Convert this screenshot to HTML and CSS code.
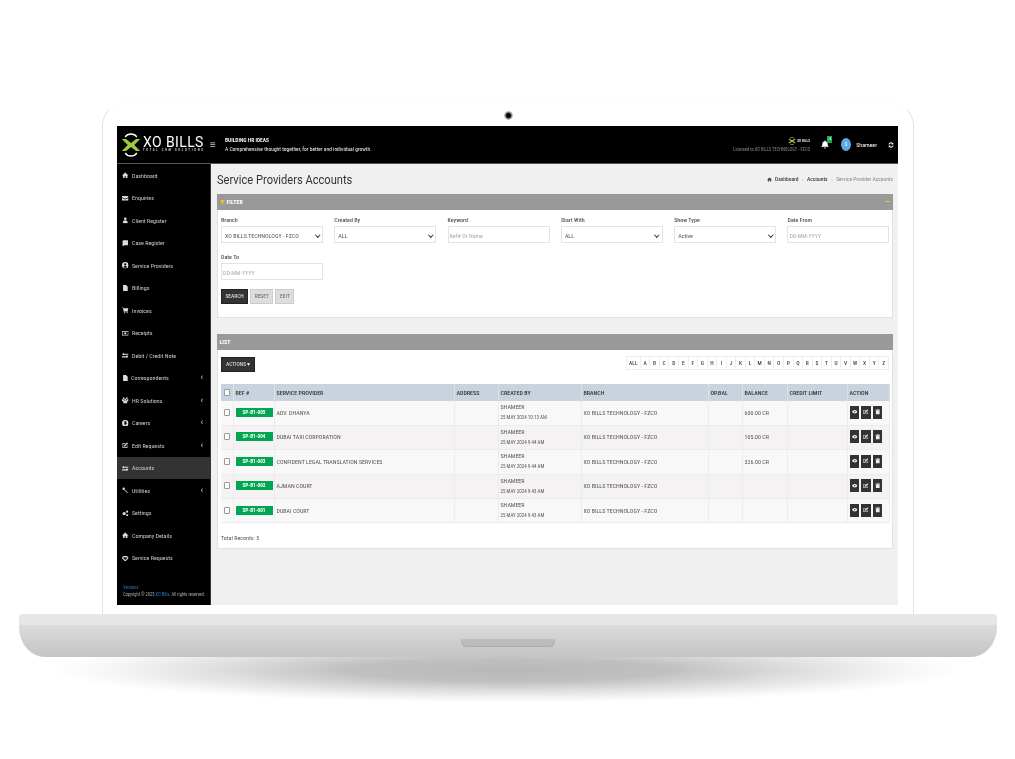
FILE: index.html
```html
<!DOCTYPE html>
<html lang="en">
<head>
<meta charset="utf-8">
<title>Service Providers Accounts</title>
<link rel="stylesheet" href="styles.css">
</head>
<body>
<svg class="defs" width="0" height="0" aria-hidden="true">
  <symbol id="i-home" viewBox="0 0 12 12"><path d="M6 1 0 6.5h2V11h3V8h2v3h3V6.5h2z"/></symbol>
  <symbol id="i-mail" viewBox="0 0 12 12"><path d="M0 2h12v2L6 7 0 4zM0 5.5 6 8.500l6-3V10H0z"/></symbol>
  <symbol id="i-user" viewBox="0 0 12 12"><circle cx="6" cy="3.200" r="2.500"/><path d="M1.500 11.500c0-4 1.500-5.500 4.500-5.500s4.500 1.500 4.500 5.500z"/></symbol>
  <symbol id="i-book" viewBox="0 0 12 12"><path d="M3 .5h8v9H3.500a1 1 0 0 0 0 1.500H11v1H3a2 2 0 0 1-2-2V2.500a2 2 0 0 1 2-2z"/></symbol>
  <symbol id="i-circle-user" viewBox="0 0 12 12"><path fill-rule="evenodd" d="M6 0a6 6 0 1 1 0 12A6 6 0 0 1 6 0zm0 2.500a2 2 0 1 0 0 4 2 2 0 0 0 0-4zM2.800 9.500c1.800 1.500 4.600 1.500 6.400 0C8.800 8 7.500 7.300 6 7.300S3.200 8 2.800 9.500z"/></symbol>
  <symbol id="i-file" viewBox="0 0 12 12"><path d="M2 0h5.500L10.500 3v9H2z"/></symbol>
  <symbol id="i-cart" viewBox="0 0 12 12"><path d="M0 1h2.500l.4 1.500H12l-1.300 5H4.200l.3 1H11v1H3.500L1.800 2H0z"/><circle cx="4.500" cy="10.800" r="1.100"/><circle cx="9.500" cy="10.800" r="1.100"/></symbol>
  <symbol id="i-money" viewBox="0 0 12 12"><path fill-rule="evenodd" d="M0 2h12v8H0zM1.200 3.200v5.600h9.600V3.200zM6 4a2 2 0 1 1 0 4 2 2 0 0 1 0-4z"/></symbol>
  <symbol id="i-swap" viewBox="0 0 12 12"><path d="M3.500 1.500v1.500H12v2H3.500v1.500L0 4zM8.500 5.500 12 8.500l-3.500 3V10H0V8h8.500z"/></symbol>
  <symbol id="i-team" viewBox="0 0 12 12"><circle cx="3" cy="2" r="1.600"/><circle cx="9" cy="2" r="1.600"/><circle cx="6" cy="4.500" r="1.800"/><path d="M0 4h3l.7 2.500h4.600L9 4h3v4H9.500v4h-7V8H0z"/></symbol>
  <symbol id="i-globe" viewBox="0 0 12 12"><path fill-rule="evenodd" d="M6 0a6 6 0 1 1 0 12A6 6 0 0 1 6 0zM3.500 3 5 5l-1 2 2 3 1-2 2-1-1.500-3 .5-2z"/></symbol>
  <symbol id="i-edit" viewBox="0 0 12 12"><path d="M1 2h6L5.800 3.200H2.200v6.600h6.600V6.800L10 5.600V11H1z"/><path d="M9.500.8l1.700 1.700L5.500 8.200l-2 .4.300-2.100z"/></symbol>
  <symbol id="i-tools" viewBox="0 0 12 12"><path d="M1 3.500 3.500 1 5 2.500 4 3.500 11 10.500 10 11.500 3 4.500 2.500 5z"/><circle cx="3" cy="3" r="2"/></symbol>
  <symbol id="i-cogs" viewBox="0 0 12 12"><circle cx="4" cy="6.500" r="3"/><circle cx="9.500" cy="3" r="2"/><circle cx="9.500" cy="10" r="2"/></symbol>
  <symbol id="i-shake" viewBox="0 0 12 12"><path fill-rule="evenodd" d="M0 4 3 2h6l3 2v2l-5 5-2 0-5-5zM3 4 2 5l4 4 4-4-1-1-2 1-1.500-1z"/></symbol>
  <symbol id="i-eye" viewBox="0 0 12 12"><path fill-rule="evenodd" d="M0 6c3-5 9-5 12 0-3 5-9 5-12 0zm6-1.500a1.500 1.500 0 1 0 0 3 1.500 1.500 0 0 0 0-3z"/></symbol>
  <symbol id="i-trash" viewBox="0 0 12 12"><path d="M4.500.5h3L8 1.500h3V3H1V1.500h3zM2 4h8v8H2z"/></symbol>
  <symbol id="i-filter" viewBox="0 0 12 12"><path d="M0 1h12L7.500 6.500V12l-3-2V6.500z"/></symbol>
  <symbol id="i-bell" viewBox="0 0 12 12"><path d="M6 0a1 1 0 0 1 1 1c2.200.5 3 2.200 3 4 0 2.500.7 3.500 2 4.500H0c1.300-1 2-2 2-4.500 0-1.800.8-3.500 3-4A1 1 0 0 1 6 0zM4.500 10.500h3a1.500 1.500 0 0 1-3 0z"/></symbol>
  <symbol id="i-sync" viewBox="0 0 12 12"><path d="M10.500 1v3.800H6.700l1.400-1.400A3.400 3.400 0 0 0 2.700 5H1a5 5 0 0 1 8.300-3.200zM1.500 11V7.200h3.800L3.900 8.600A3.400 3.400 0 0 0 9.300 7H11a5 5 0 0 1-8.300 3.200z"/></symbol>
  <symbol id="i-mark" viewBox="0 0 24 24" preserveAspectRatio="none"><path class="mark-ring" d="M5 4C8 0 16 0 19 4M5 20c3 4 11 4 14 0"/><path class="mark-x" d="M1 6h5l6 4 6-4h5l-7 6 7 6h-5l-6-4-6 4H1l7-6z"/></symbol>
</svg>

<main class="stage">
  <section class="lid">
    <span class="camera"></span>
    <div class="screen">
      <header class="topbar">
        <div class="brand">
          <svg class="brand-mark"><use href="#i-mark"/></svg>
          <div class="brand-text">
            <span class="brand-name">XO BILLS</span>
            <span class="brand-tag">TOTAL CRM SOLUTIONS</span>
          </div>
        </div>
        <span class="burger">≡</span>
        <div class="slogan">
          <strong>BUILDING HR IDEAS</strong>
          <span>A Comprehensive thought together, for better and individual growth.</span>
        </div>
        <div class="license">
          <span class="license-logo"><svg class="license-mark"><use href="#i-mark"/></svg>XO BILLS</span>
          <span class="license-text">Licensed to XO BILLS TECHNOLOGY - FZCO</span>
        </div>
        <div class="bell"><svg class="bell-icon"><use href="#i-bell"/></svg><span class="bell-badge">24</span></div>
        <span class="avatar">S</span>
        <span class="user-name">Shameer</span>
        <svg class="sync-icon"><use href="#i-sync"/></svg>
      </header>
      <div class="body">
        <aside class="sidebar">
          <nav class="nav">
            <a class="nav-item"><svg class="nav-icon"><use href="#i-home"/></svg><span>Dashboard</span></a>
            <a class="nav-item"><svg class="nav-icon"><use href="#i-mail"/></svg><span>Enquiries</span></a>
            <a class="nav-item"><svg class="nav-icon"><use href="#i-user"/></svg><span>Client Register</span></a>
            <a class="nav-item"><svg class="nav-icon"><use href="#i-book"/></svg><span>Case Register</span></a>
            <a class="nav-item"><svg class="nav-icon"><use href="#i-circle-user"/></svg><span>Service Providers</span></a>
            <a class="nav-item"><svg class="nav-icon"><use href="#i-file"/></svg><span>Billings</span></a>
            <a class="nav-item"><svg class="nav-icon"><use href="#i-cart"/></svg><span>Invoices</span></a>
            <a class="nav-item"><svg class="nav-icon"><use href="#i-money"/></svg><span>Receipts</span></a>
            <a class="nav-item"><svg class="nav-icon"><use href="#i-swap"/></svg><span>Debit / Credit Note</span></a>
            <a class="nav-item tight"><svg class="nav-icon"><use href="#i-file"/></svg><span>Correspondents</span><i class="caret">‹</i></a>
            <a class="nav-item"><svg class="nav-icon"><use href="#i-team"/></svg><span>HR Solutions</span><i class="caret">‹</i></a>
            <a class="nav-item"><svg class="nav-icon"><use href="#i-globe"/></svg><span>Careers</span><i class="caret">‹</i></a>
            <a class="nav-item"><svg class="nav-icon"><use href="#i-edit"/></svg><span>Edit Requests</span><i class="caret">‹</i></a>
            <a class="nav-item active"><svg class="nav-icon"><use href="#i-swap"/></svg><span>Accounts</span></a>
            <a class="nav-item"><svg class="nav-icon"><use href="#i-tools"/></svg><span>Utilities</span><i class="caret">‹</i></a>
            <a class="nav-item"><svg class="nav-icon"><use href="#i-cogs"/></svg><span>Settings</span></a>
            <a class="nav-item"><svg class="nav-icon"><use href="#i-home"/></svg><span>Company Details</span></a>
            <a class="nav-item"><svg class="nav-icon"><use href="#i-shake"/></svg><span>Service Requests</span></a>
          </nav>
          <footer class="side-foot">
            <span class="link">Versions</span>
            <span>Copyright © 2025 <b class="link">XO Bills</b>. All rights reserved.</span>
          </footer>
        </aside>
        <div class="content">
          <div class="page-head">
            <h1>Service Providers Accounts</h1>
            <div class="crumbs">
              <svg class="crumb-icon"><use href="#i-home"/></svg>
              <b>Dashboard</b><em>›</em><b>Accounts</b><em>›</em><span>Service Provider Accounts</span>
            </div>
          </div>

          <section class="panel filter">
            <div class="panel-head">
              <svg class="filter-icon"><use href="#i-filter"/></svg>
              <span>FILTER</span>
              <i class="collapse"></i>
            </div>
            <div class="filter-body">
              <div class="field-grid">
                <label class="field">Branch<div class="input select">XO BILLS TECHNOLOGY - FZCO</div></label>
                <label class="field">Created By<div class="input select">ALL</div></label>
                <label class="field">Keyword<div class="input hint">Ref# Or Name</div></label>
                <label class="field">Start With<div class="input select">ALL</div></label>
                <label class="field">Show Type<div class="input select">Active</div></label>
                <label class="field">Date From<div class="input hint">DD-MM-YYYY</div></label>
                <label class="field">Date To<div class="input hint">DD-MM-YYYY</div></label>
              </div>
              <div class="buttons">
                <span class="btn dark">SEARCH</span><span class="btn">RESET</span><span class="btn">EXIT</span>
              </div>
            </div>
          </section>

          <section class="panel list">
            <div class="panel-head"><span>LIST</span></div>
            <div class="list-body">
              <div class="toolbar">
                <span class="btn dark actions">ACTIONS ▾</span>
                <div class="alpha">
                  <span>ALL</span><span>A</span><span>B</span><span>C</span><span>D</span><span>E</span><span>F</span><span>G</span><span>H</span><span>I</span><span>J</span><span>K</span><span>L</span><span>M</span><span>N</span><span>O</span><span>P</span><span>Q</span><span>R</span><span>S</span><span>T</span><span>U</span><span>V</span><span>W</span><span>X</span><span>Y</span><span>Z</span>
                </div>
              </div>
              <table class="grid">
                <colgroup>
                  <col class="c-check"><col class="c-ref"><col class="c-sp"><col class="c-addr"><col class="c-by"><col class="c-branch"><col class="c-op"><col class="c-bal"><col class="c-limit"><col class="c-act">
                </colgroup>
                <thead>
                  <tr><th><i class="check"></i></th><th>REF #</th><th>SERVICE PROVIDER</th><th>ADDRESS</th><th>CREATED BY</th><th>BRANCH</th><th>OP.BAL</th><th>BALANCE</th><th>CREDIT LIMIT</th><th>ACTION</th></tr>
                </thead>
                <tbody>
                  <tr>
                    <td><i class="check"></i></td><td><span class="tag">SP-B1-005</span></td><td>ADV. DHANYA</td><td></td>
                    <td><span class="by">SHAMEER</span><small>25 MAY 2024 10:13 AM</small></td><td>XO BILLS TECHNOLOGY - FZCO</td><td></td><td>600.00 CR</td><td></td>
                    <td><div class="acts"><span class="act"><svg><use href="#i-eye"/></svg></span><span class="act"><svg><use href="#i-edit"/></svg></span><span class="act"><svg><use href="#i-trash"/></svg></span></div></td>
                  </tr>
                  <tr>
                    <td><i class="check"></i></td><td><span class="tag">SP-B1-004</span></td><td>DUBAI TAXI CORPORATION</td><td></td>
                    <td><span class="by">SHAMEER</span><small>25 MAY 2024 9:44 AM</small></td><td>XO BILLS TECHNOLOGY - FZCO</td><td></td><td>105.00 CR</td><td></td>
                    <td><div class="acts"><span class="act"><svg><use href="#i-eye"/></svg></span><span class="act"><svg><use href="#i-edit"/></svg></span><span class="act"><svg><use href="#i-trash"/></svg></span></div></td>
                  </tr>
                  <tr>
                    <td><i class="check"></i></td><td><span class="tag">SP-B1-003</span></td><td>CONFIDENT LEGAL TRANSLATION SERVICES</td><td></td>
                    <td><span class="by">SHAMEER</span><small>25 MAY 2024 9:44 AM</small></td><td>XO BILLS TECHNOLOGY - FZCO</td><td></td><td>326.00 CR</td><td></td>
                    <td><div class="acts"><span class="act"><svg><use href="#i-eye"/></svg></span><span class="act"><svg><use href="#i-edit"/></svg></span><span class="act"><svg><use href="#i-trash"/></svg></span></div></td>
                  </tr>
                  <tr>
                    <td><i class="check"></i></td><td><span class="tag">SP-B1-002</span></td><td>AJMAN COURT</td><td></td>
                    <td><span class="by">SHAMEER</span><small>25 MAY 2024 9:43 AM</small></td><td>XO BILLS TECHNOLOGY - FZCO</td><td></td><td></td><td></td>
                    <td><div class="acts"><span class="act"><svg><use href="#i-eye"/></svg></span><span class="act"><svg><use href="#i-edit"/></svg></span><span class="act"><svg><use href="#i-trash"/></svg></span></div></td>
                  </tr>
                  <tr>
                    <td><i class="check"></i></td><td><span class="tag">SP-B1-001</span></td><td>DUBAI COURT</td><td></td>
                    <td><span class="by">SHAMEER</span><small>25 MAY 2024 9:43 AM</small></td><td>XO BILLS TECHNOLOGY - FZCO</td><td></td><td></td><td></td>
                    <td><div class="acts"><span class="act"><svg><use href="#i-eye"/></svg></span><span class="act"><svg><use href="#i-edit"/></svg></span><span class="act"><svg><use href="#i-trash"/></svg></span></div></td>
                  </tr>
                </tbody>
              </table>
              <p class="total">Total Records: 5</p>
            </div>
          </section>
        </div>
      </div>
    </div>
  </section>
  <section class="base"><span class="notch"></span></section>
  <div class="shadow"></div>
</main>
</body>
</html>
```

FILE: styles.css
```css
* { box-sizing: border-box; }
html, body { margin: 0; background: #fff; }
body { font-family: Roboto, "Liberation Sans", sans-serif; font-size: 6px; font-stretch: 75%; color: #444; overflow: hidden; }
.defs { position: absolute; }
svg { fill: currentColor; display: block; }

.stage { width: 1015px; height: 759px; padding-top: 102px; display: flex; flex-direction: column; align-items: center; overflow: hidden; }

.lid { position: relative; width: 812px; height: 512px; margin-left: 1px; padding: 23px 14px 0; border: 1px solid #e2e2e2; border-top-color: #fbfbfb; border-bottom: 0; border-radius: 24px 24px 0 0; background: #fff; }
.camera { position: absolute; top: 8px; left: 401px; width: 9px; height: 9px; border-radius: 50%; background: radial-gradient(circle, #000 0 2px, #555 2.500px, #ddd 4.500px); }
.screen { width: 781px; height: 479px; display: flex; flex-direction: column; background: #f0f0f0; will-change: transform; }

.topbar { height: 38px; flex: none; display: flex; align-items: center; background: #000; color: #fff; border-bottom: 1px solid #555; padding: 0 4px; }
.brand { display: flex; align-items: center; width: 85px; flex: none; }
.brand-mark { width: 20px; height: 24px; flex: none; }
.mark-x { fill: #9ccb3b; }
.mark-ring { fill: none; stroke: #fff; stroke-width: 1.400; }
.brand-text { display: flex; flex-direction: column; margin-left: 2px; }
.brand-name { font-size: 14px; font-stretch: 100%; line-height: 11px; letter-spacing: .4px; white-space: nowrap; }
.brand-tag { font-size: 3px; line-height: 3px; letter-spacing: 1.700px; color: #ccc; white-space: nowrap; margin-top: 1px; font-weight: 700; }
.burger { width: 14px; margin-right: 5px; font-size: 10px; color: #ccc; text-align: center; }
.slogan { display: flex; flex-direction: column; gap: 3px; color: #eee; font-size: 5.500px; line-height: 6px; }
.slogan strong { font-size: 5.500px; }
.license { margin-left: auto; display: flex; flex-direction: column; align-items: flex-end; gap: 2px; color: #888; font-size: 4.500px; }
.license-logo { display: flex; align-items: center; gap: 1px; color: #ddd; font-size: 3.500px; font-weight: 700; }
.license-mark { width: 8px; height: 8px; }
.bell { position: relative; margin-left: 11px; }
.bell-icon { width: 8px; height: 9px; }
.bell-badge { position: absolute; top: -4px; left: 6px; width: 5px; height: 7px; background: #1aa64a; font-size: 3px; text-align: center; line-height: 7px; }
.avatar { margin-left: 12px; width: 10px; height: 13px; border-radius: 50%; background: #5fa8e6; font-size: 5px; line-height: 13px; text-align: center; }
.user-name { margin-left: 5px; font-size: 6px; }
.sync-icon { width: 6px; height: 6px; margin-left: 11px; }

.body { flex: 1; display: flex; min-height: 0; }
.sidebar { width: 94px; flex: none; background: #000; color: #ccc; display: flex; flex-direction: column; border-right: 1px solid #333; }
.nav { display: flex; flex-direction: column; }
.nav-item { height: 22.500px; flex: none; display: flex; align-items: center; padding-left: 5px; }
.nav-item span { margin-left: 3.500px; white-space: nowrap; }
.nav-item.tight span { margin-left: 2.500px; }
.nav-item.active { background: #333; }
.nav-icon { width: 6.500px; height: 6.500px; flex: none; color: #ddd; }
.caret { margin-left: auto; margin-right: 7px; font-size: 9px; line-height: 9px; font-style: normal; font-weight: 700; color: #bbb; }
.side-foot { margin-top: auto; padding: 0 0 8px 6px; display: flex; flex-direction: column; gap: 2px; font-size: 4.500px; line-height: 5px; color: #aaa; white-space: nowrap; }
.link { color: #2a78c0; font-weight: 400; }

.content { flex: 1; padding: 0 5px 0 6px; min-width: 0; }
.page-head { height: 30px; display: flex; justify-content: space-between; align-items: center; }
h1 { margin: 0; font-size: 12.500px; font-stretch: 100%; font-weight: 400; color: #333; white-space: nowrap; transform: scaleX(.89); transform-origin: left center; }
.crumbs { display: flex; align-items: center; gap: 3.500px; font-size: 5.500px; color: #888; }
.crumbs b { font-weight: 500; color: #444; }
.crumbs em { font-style: normal; color: #aaa; }
.crumb-icon { width: 5px; height: 5px; color: #444; }

.panel { background: #fff; border: 1px solid #e2e2e2; border-top: 0; }
.panel-head { height: 16px; display: flex; align-items: center; gap: 2px; margin: 0 -1px; padding: 0 2.500px 1px; background: #999; color: #fff; font-size: 6px; font-weight: 700; }
.filter-icon { width: 5px; height: 6px; color: #f5c518; }
.collapse { margin-left: auto; width: 5px; height: 1.500px; background: #f5c518; margin-right: 1px; }
.filter { height: 124px; }
.filter-body { padding: 6px 3px; }
.field-grid { display: grid; grid-template-columns: repeat(6, 102px); column-gap: 11.300px; row-gap: 10px; }
.field { display: block; font-size: 6px; font-weight: 500; color: #555; line-height: 8px; }
.input { position: relative; margin-top: 2px; height: 17px; border: 1px solid #e4e4e4; background: #fff; padding: 1px 0 0 3px; font-size: 6px; font-weight: 400; line-height: 15px; color: #555; }
.hint { color: #aaa; padding-left: 1px; }
.select::after { content: ""; position: absolute; right: 3px; top: 5.500px; width: 2.500px; height: 2.500px; border: solid #333; border-width: 0 1px 1px 0; transform: rotate(45deg); }
.buttons { display: flex; gap: 2px; margin-top: 9px; }
.btn { height: 15px; padding: 0 3.500px; background: #ddd; border: 1px solid #ccc; color: #666; font-size: 5.500px; line-height: 13px; white-space: nowrap; }
.btn.dark { background: #333; border-color: #222; color: #eee; }

.list { height: 215px; margin-top: 16px; }
.list-body { padding: 7px 3px 0; }
.toolbar { display: flex; justify-content: space-between; align-items: flex-start; height: 15px; }
.actions { padding: 0 4px; }
.alpha { display: flex; margin-top: -1px; }
.alpha span { width: 9.560px; height: 14px; border: 1px solid #eee; border-left-width: 0; font-size: 5.500px; font-weight: 500; line-height: 12px; text-align: center; color: #444; }
.alpha span:first-child { border-left-width: 1px; width: 15px; }

.grid { table-layout: fixed; width: 668px; margin-top: 12px; border-collapse: collapse; }
.c-check { width: 12px; } .c-ref { width: 41px; } .c-sp { width: 180px; } .c-addr { width: 44px; } .c-by { width: 83px; }
.c-branch { width: 127px; } .c-op { width: 34px; } .c-bal { width: 45px; } .c-limit { width: 60px; } .c-act { width: 42px; }
th { height: 17px; padding: 0 2px 1px; background: #c8d3dd; border-right: 1px solid #dbe2e8; text-align: left; font-size: 6px; font-weight: 500; color: #333; white-space: nowrap; overflow: hidden; }
td { height: 24.400px; padding: 0 2px 1.500px; background: #f8f8f8; border: 1px solid #ececec; border-width: 0 1px 1px 0; font-size: 6px; color: #555; white-space: nowrap; overflow: hidden; }
tbody tr:nth-child(even) td { background: #f5f2f4; }
.check { display: block; width: 5.500px; height: 7px; margin: 0 auto; border: 1px solid #999; border-radius: 1px; background: #fff; }
.tag { display: block; height: 9px; background: #00a651; color: #fff; font-size: 5.200px; font-weight: 700; text-align: center; line-height: 9px; margin-right: -1px; }
.by, td small { display: block; }
.by { line-height: 8px; }
td small { font-size: 5px; line-height: 7px; margin-top: 3px; }
.acts { display: flex; gap: 2px; }
.act { width: 9.500px; height: 13px; background: #333; color: #eee; display: flex; align-items: center; justify-content: center; }
.act svg { width: 5.500px; height: 5.500px; }
.total { margin: 11px 0 0; font-size: 6px; color: #555; }

.base { position: relative; width: 978px; height: 43px; flex: none; border-radius: 3px 3px 26px 26px / 3px 3px 30px 30px; background: linear-gradient(#e6e6e6 0 11px, #dcdcdc 11px, #c4c4c4); }
.notch { position: absolute; left: 442px; top: 25px; width: 94px; height: 8px; border-radius: 2px 2px 6px 6px; background: #bcbcbc; box-shadow: inset 0 -1px 1px #aaa; }
.shadow { width: 920px; height: 46px; flex: none; background: radial-gradient(ellipse 456px 33px at 50% 13px, #b8b8b8 0, #c0c0c0 35%, #e0e0e0 65%, #f8f8f8 90%, #fff 100%); }
```
